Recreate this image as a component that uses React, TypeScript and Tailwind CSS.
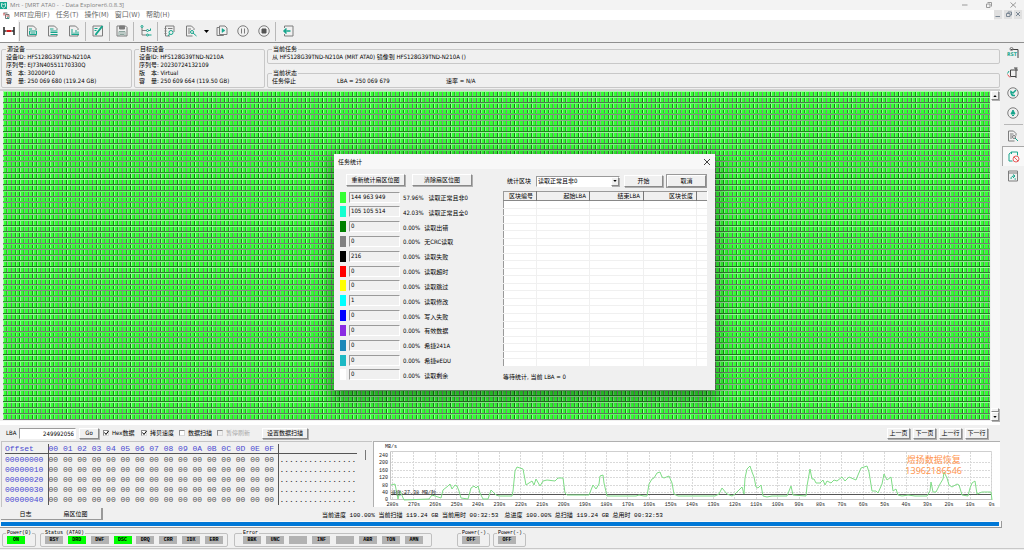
import type { ReactNode } from "react";

const cjk = "font-['DejaVu_Sans_Condensed','Noto_Sans_CJK_SC',sans-serif]";
const mono = "font-['Liberation_Mono','Noto_Sans_CJK_SC',monospace]";

const raised =
  "border border-t-white border-l-white border-r-[#8a8a8a] border-b-[#8a8a8a] bg-[#f0f0f0] shadow-[1px_1px_0_#b0b0b0]";
const sunken = "border border-t-[#9a9a9a] border-l-[#9a9a9a] border-r-white border-b-white";

const menus = ["MRT应用(F)", "任务(T)", "操作(M)", "窗口(W)", "帮助(H)"];

const stats = [
  { color: "bg-[#33ff33]", value: "144 963 949", pct: "57.96%", label: "读取正常且非0" },
  { color: "bg-[#14ffd0]", value: "105 105 514", pct: "42.03%", label: "读取正常且全0" },
  { color: "bg-[#008000]", value: "0", pct: "0.00%", label: "读取出错" },
  { color: "bg-[#808080]", value: "0", pct: "0.00%", label: "无CRC读取" },
  { color: "bg-black", value: "216", pct: "0.00%", label: "读取失败" },
  { color: "bg-[#ff0000]", value: "0", pct: "0.00%", label: "读取超时" },
  { color: "bg-[#ffff00]", value: "0", pct: "0.00%", label: "读取跳过" },
  { color: "bg-[#00ffff]", value: "1", pct: "0.00%", label: "读取修改" },
  { color: "bg-[#0000ff]", value: "0", pct: "0.00%", label: "写入失败" },
  { color: "bg-[#8a2be2]", value: "0", pct: "0.00%", label: "有效数据" },
  { color: "bg-[#1a87b9]", value: "0", pct: "0.00%", label: "希捷241A" },
  { color: "bg-[#1cb8c4]", value: "0", pct: "0.00%", label: "希捷eEDU" },
  { color: "bg-white", value: "0", pct: "0.00%", label: "读取剩余" },
];

const hexCols = ["00", "01", "02", "03", "04", "05", "06", "07", "08", "09", "0A", "0B", "0C", "0D", "0E", "0F"];
const hexRows = ["00000000", "00000010", "00000020", "00000030", "00000040"];

const statusLeds = [
  { name: "BSY", on: false },
  { name: "DRD", on: true },
  { name: "DWF", on: false },
  { name: "DSC", on: true },
  { name: "DRQ", on: false },
  { name: "CRR", on: false },
  { name: "IDX", on: false },
  { name: "ERR", on: false },
];
const errorLeds = ["BBK", "UNC", "", "INF", "", "ABR", "TON", "AMN"];

const speedCurve =
  "17,43 21,42 24,57 26,49 30,58 55,57 58,53 61,54 67,56 69,48 74,44 76,42 78,47 81,43 83,44 85,49 87,56 94,57 97,46 100,44 102,46 104,44 106,51 109,57 114,57 117,48 120,51 122,53 125,54 138,54 139,49 141,29 143,25 146,26 149,27 152,43 155,41 158,39 160,43 162,37 166,44 169,39 173,38 181,39 184,36 189,36 191,51 193,53 215,53 219,43 222,47 225,42 226,34 229,33 230,41 233,54 250,54 262,54 265,53 270,54 273,54 275,42 278,37 280,36 283,31 286,30 288,35 290,36 295,34 298,41 300,52 304,54 321,54 341,54 345,52 348,46 353,52 358,54 361,52 368,45 370,52 371,36 373,27 376,24 378,30 380,35 382,45 384,46 387,43 389,54 393,55 398,54 413,54 417,44 419,53 432,54 433,44 436,27 438,37 440,37 442,41 446,41 449,38 451,43 453,39 457,41 460,38 463,39 468,35 471,39 475,35 482,38 484,33 487,26 493,24 495,30 498,49 502,49 504,51 508,42 510,32 513,38 517,35 519,49 522,47 524,53 528,54 534,53 541,54 553,54 556,49 557,40 559,50 562,50 566,42 569,37 570,30 573,36 575,43 578,45 583,42 585,43 588,53 594,54 596,46 598,41 601,39 603,52 608,50 617,50 618,58";

const range = (n: number) => Array.from({ length: n }, (_, i) => i);

const MAP_W = 987;
const MAP_H = 329;
const EDGE = 8 / 15;

// how much of pixel p is covered by the span [from, to]
const cover = (p: number, from: number, to: number) => Math.max(0, Math.min(p + 1, to) - Math.max(p, from));

// each cell starts with a light edge and ends in a dark edge, both EDGE wide
function edgeLines(size: number, pitch: number) {
  const lines: { pos: number; color: string }[] = [];
  for (let p = 0; p < size; p++) {
    let light = 0;
    let dark = 0;
    const cell = Math.floor(p / pitch);
    for (const end of [cell * pitch, (cell + 1) * pitch]) {
      light += cover(p, end, end + EDGE);
      dark += cover(p, end - EDGE, end);
    }
    const green = 1 - light - dark;
    if (green > 0.98) continue;
    const rb = Math.round(51 * green + 255 * light);
    const g = Math.round(255 * (green + light));
    lines.push({ pos: p, color: `rgb(${rb},${g},${rb})` });
  }
  return lines;
}

const mapRows = edgeLines(MAP_H, 11 * EDGE);
const mapCols = edgeLines(MAP_W, 8 * EDGE);

function SectorMap() {
  return (
    <svg className="block h-[329px] w-full" viewBox={`0 0 ${MAP_W} ${MAP_H}`} preserveAspectRatio="none">
      <rect width={MAP_W} height={MAP_H} fill="#33ff33" />
      {mapCols.map((l) => (
        <rect key={l.pos} x={l.pos} width="1" height={MAP_H} fill={l.color} />
      ))}
      {mapRows.map((l) => (
        <rect key={l.pos} y={l.pos} width={MAP_W} height="1" fill={l.color} />
      ))}
    </svg>
  );
}

function Icon({ children, className = "size-3" }: { children: ReactNode; className?: string }) {
  return (
    <svg viewBox="0 0 24 24" fill="none" stroke="#7d7d7d" strokeWidth="2" className={className}>
      {children}
    </svg>
  );
}

const teal = "#16a58c";

function DocIcon({ children }: { children: ReactNode }) {
  return (
    <Icon>
      <path d="M20 10V7l-5-5H3v20h17v-3" />
      {children}
    </Icon>
  );
}

function ToolButton({ label, children, className = "h-full w-[21px]" }: { label: string; children: ReactNode; className?: string }) {
  return (
    <button type="button" aria-label={label} className={`flex shrink-0 items-center justify-center ${className}`}>
      {children}
    </button>
  );
}

function Sep() {
  return <div className="mx-px h-[19px] w-px shrink-0 bg-[#b8b8b8]" />;
}

function Toolbar() {
  return (
    <div className="flex h-[23px] items-center border-b border-[#8f8f8f] bg-[#f0f0f0]">
      <ToolButton label="连接" className="h-full w-[18px] bg-white">
        <svg viewBox="0 0 24 24" fill="none" className="size-3">
          <path d="M2 4v16M22 4v16" stroke="#222" strokeWidth="3" />
          <path d="M2 12h5M17 12h5" stroke="#333" strokeWidth="3" />
          <path d="M7 12h10" stroke="#d02020" strokeWidth="4" />
        </svg>
      </ToolButton>
      <Sep />
      <ToolButton label="日志文档">
        <DocIcon>
          <path d="M6 8h6M7 12h14v7H7zM9 16h10" stroke={teal} />
        </DocIcon>
      </ToolButton>
      <ToolButton label="列表文档">
        <DocIcon>
          <path d="M6 8h7M7 12h14M7 15h14M7 19h14" stroke={teal} />
        </DocIcon>
      </ToolButton>
      <ToolButton label="图表文档">
        <DocIcon>
          <path d="M8 19V8M12 19v-4M16 19v-9M20 19v-6M7 19h15" stroke={teal} />
        </DocIcon>
      </ToolButton>
      <Sep />
      <ToolButton label="编辑">
        <Icon>
          <path d="M2 2h19v20H2z" />
          <path d="M5 7h6M5 11h4" stroke={teal} />
          <path d="M21 2L9 17l-2 3" stroke={teal} strokeWidth="4" />
        </Icon>
      </ToolButton>
      <Sep />
      <ToolButton label="保存">
        <Icon>
          <path d="M2 2h17l3 3v17H2z" />
          <path d="M7 2h10v6H7z" fill="#7d7d7d" />
          <path d="M6 22v-9h12v9M8 16h8M8 19h8" stroke="#8aa39c" />
        </Icon>
      </ToolButton>
      <Sep />
      <ToolButton label="结构">
        <Icon>
          <path d="M4 5v15h9M4 11h9" />
          <circle cx="4" cy="3" r="2" stroke={teal} />
          <circle cx="15" cy="11" r="2" stroke={teal} />
          <circle cx="15" cy="20" r="2" stroke={teal} />
          <path d="M17 11h4v-4M17 20h6" stroke={teal} />
        </Icon>
      </ToolButton>
      <Sep />
      <ToolButton label="设置">
        <Icon>
          <path d="M3 2h17v12M3 2v20h9M1 7h4M1 12h4M1 17h4M8 7h9" />
          <circle cx="14" cy="15" r="4" stroke={teal} />
          <path d="M11 18l-3 4" stroke={teal} />
        </Icon>
      </ToolButton>
      <ToolButton label="查找">
        <Icon>
          <path d="M15 22H3V2h10l5 5v3M6 8h6M6 12h4M6 16h4" />
          <circle cx="14" cy="14" r="3" stroke={teal} />
          <path d="M16 16l7 6" stroke={teal} />
        </Icon>
      </ToolButton>
      <ToolButton label="更多" className="h-full w-[10px]">
        <svg viewBox="0 0 10 6" className="h-[3px] w-[5px]">
          <path d="M0 0h10L5 6z" fill="#000" />
        </svg>
      </ToolButton>
      <ToolButton label="运行">
        <Icon>
          <path d="M6 5H2v16h13v-3M7 2h11l4 4v13H7z" />
          <path d="M12 7v8l6-4z" fill={teal} stroke={teal} strokeWidth="1" />
        </Icon>
      </ToolButton>
      <ToolButton label="暂停">
        <Icon>
          <circle cx="12" cy="12" r="10.5" />
          <path d="M9 7v10M15 7v10" />
        </Icon>
      </ToolButton>
      <ToolButton label="停止">
        <Icon>
          <circle cx="12" cy="12" r="10.5" />
          <path d="M8 8h8v8H8z" fill="#555" stroke="#555" />
        </Icon>
      </ToolButton>
      <Sep />
      <ToolButton label="退出">
        <Icon>
          <path d="M5 6V2h17v20H5v-4" />
          <path d="M17 12H4M9 7l-5 5 5 5" stroke={teal} strokeWidth="3" />
        </Icon>
      </ToolButton>
    </div>
  );
}

function Group({ title, className, children }: { title: string; className: string; children: ReactNode }) {
  return (
    <fieldset className={`rounded-[2px] border border-[#c8c8c8] pl-1 text-[6px] leading-[8px] ${className}`}>
      <legend className="h-2 px-px">{title}</legend>
      {children}
    </fieldset>
  );
}

function DeviceInfo() {
  return (
    <div className="flex gap-[2px] pt-[2px] pr-[2px] pl-px">
      <Group title="源设备" className="h-[43px] w-[131px] shrink-0">
        <p>设备ID: HFS128G39TND-N210A</p>
        <p>序列号: EJ73N40551170330Q</p>
        <p>版　本: 30200P10</p>
        <p>容　量: 250 069 680 (119.24 GB)</p>
      </Group>
      <Group title="目标设备" className="h-[43px] w-[131px] shrink-0">
        <p>设备ID: HFS128G39TND-N210A</p>
        <p>序列号: 20230724132109</p>
        <p>版　本: Virtual</p>
        <p>容　量: 250 609 664 (119.50 GB)</p>
      </Group>
      <div className="flex min-w-0 flex-1 flex-col justify-between">
        <Group title="当前任务" className="h-[19px]">
          <p>从 HFS128G39TND-N210A (MRT ATA0) 镜像到 HFS128G39TND-N210A ()</p>
        </Group>
        <Group title="当前状态" className="h-[19px]">
          <div className="flex">
            <p className="w-[65px]">任务停止</p>
            <p className="w-[109px]">LBA = 250 069 679</p>
            <p>速率 = N/A</p>
          </div>
        </Group>
      </div>
    </div>
  );
}

function SideBar() {
  return (
    <aside className="flex w-[22px] shrink-0 flex-col items-center">
      <ToolButton label="复位" className="h-5 w-full">
        <svg viewBox="0 0 24 24" fill="none" className="size-3">
          <text x="0" y="18" fontSize="10" fontWeight="700" fill={teal} className={cjk}>RST</text>
          <path d="M8 5h14v17" stroke="#444" strokeWidth="2" />
          <circle cx="9" cy="4" r="3" stroke="#777" strokeWidth="2" />
        </svg>
      </ToolButton>
      <ToolButton label="电源" className="h-5 w-full">
        <svg viewBox="0 0 24 24" fill="none" className="size-3" strokeWidth="2">
          <path d="M7 6h15M18 2v20M7 6v13h11M14 2h7" stroke="#444" />
          <path d="M4 8L1 13" stroke={teal} />
          <path d="M1 15l5 6" stroke="#e05050" />
        </svg>
      </ToolButton>
      <ToolButton label="刷新" className="h-5 w-full">
        <Icon>
          <circle cx="12" cy="12" r="10.5" />
          <path d="M18 6l-6 6-4-3c-1 5 2 9 8 8" stroke={teal} strokeWidth="3" />
        </Icon>
      </ToolButton>
      <ToolButton label="提醒" className="h-5 w-full">
        <Icon>
          <circle cx="12" cy="12" r="10.5" />
          <path d="M12 6l4 8H8zM10 17h4" fill={teal} stroke={teal} />
        </Icon>
      </ToolButton>
      <div className="my-px h-px w-[19px] bg-[#b8b8b8]" />
      <ToolButton label="查看" className="h-5 w-full">
        <Icon>
          <path d="M15 22H3V2h10l5 5v4M6 8h7M6 12h5M6 16h4" />
          <circle cx="14" cy="14" r="3" />
          <path d="M16 16l6 6" stroke={teal} />
        </Icon>
      </ToolButton>
      <ToolButton label="统计" className="h-5 w-full border-t border-l border-[#a8a8a8] bg-[#f8f8f8]">
        <Icon>
          <path d="M9 20H2V6l5-4h12v7M7 2v4" stroke={teal} />
          <circle cx="16" cy="16" r="6" stroke="#e86060" />
          <path d="M12 12l8 8" stroke="#e86060" />
        </Icon>
      </ToolButton>
      <ToolButton label="报告" className="h-5 w-full">
        <Icon>
          <path d="M3 2h18v20H3zM3 6h18" />
          <path d="M8 18c0-5 3-6 7-6M12 9l4 3-4 4M15 18h3" stroke={teal} />
        </Icon>
      </ToolButton>
    </aside>
  );
}

function Btn({ children, className }: { children: ReactNode; className: string }) {
  return (
    <button type="button" className={`flex items-center justify-center whitespace-nowrap ${raised} ${className}`}>
      {children}
    </button>
  );
}

function Check({ label, className, checked, disabled }: { label: string; className: string; checked?: boolean; disabled?: boolean }) {
  return (
    <label className={`flex items-center gap-[3px] whitespace-nowrap ${disabled ? "text-[#a8a8a8]" : ""} ${className}`}>
      <span className="relative size-[6px]">
        <input
          type="checkbox"
          defaultChecked={checked}
          disabled={disabled}
          className="peer block size-[6px] appearance-none border border-[#8c8c8c] border-r-[#d8d8d8] border-b-[#d8d8d8] bg-white disabled:bg-[#f0f0f0]"
        />
        <svg viewBox="0 0 12 12" className="pointer-events-none absolute inset-0 hidden peer-checked:block">
          <path d="M3 5l3 4 5-7" fill="none" stroke="#000" strokeWidth="2" />
        </svg>
      </span>
      {label}
    </label>
  );
}

function LbaBar() {
  return (
    <div className="flex h-4 items-center pr-[14px] pl-[6px] text-[6px] leading-[8px]">
      <label htmlFor="lba" className="w-[13px]">LBA</label>
      <input id="lba" defaultValue="249992056" className={`h-[11px] w-[57px] bg-white pr-px text-right ${sunken}`} />
      <Btn className="ml-[3px] h-[11px] w-[20px]">Go</Btn>
      <Check label="Hex数据" className="ml-[4px] w-[38px]" checked />
      <Check label="拷贝速度" className="w-[38px]" checked />
      <Check label="数据扫描" className="w-[38px]" />
      <Check label="暂停刷新" className="w-[38px]" disabled />
      <Btn className="ml-[7px] h-[11px] w-[46px]">设置数据扫描</Btn>
      <div className="ml-auto flex gap-[3px]">
        {["上一页", "下一页", "上一行", "下一行"].map((t) => (
          <Btn key={t} className="h-[11px] w-[23px]">{t}</Btn>
        ))}
      </div>
    </div>
  );
}

function HexView() {
  return (
    <div className={`flex h-[66px] w-[371px] shrink-0 border-t border-l border-[#c4c4c4] pt-[2px] pl-[3px] text-[8px] ${mono}`}>
      <table className="h-[61px] border-collapse text-left leading-[9px]">
        <thead className="border-b border-[#555]">
          <tr className="text-[#4a4ad0]">
            <th className="w-[43px] border-r border-[#555] p-0 font-normal">Offset</th>
            <th className="w-[230px] border-r border-[#555] p-0 font-normal whitespace-pre">{hexCols.join(" ")}</th>
            <th className="w-[79px] p-0" aria-label="ASCII" />
          </tr>
        </thead>
        <tbody>
          {hexRows.map((r) => (
            <tr key={r}>
              <td className="border-r border-[#555] p-0 text-[#4a4ad0]">{r}</td>
              <td className="border-r border-[#555] p-0 whitespace-pre text-[#555]">{hexCols.map(() => "00").join(" ")}</td>
              <td className="p-0 pl-px text-[#222]">................</td>
            </tr>
          ))}
        </tbody>
      </table>
      <div className="mt-[6px] ml-[8px] h-[10px] w-px bg-[#777]" />
    </div>
  );
}

function SpeedChart() {
  return (
    <div className="relative h-[66px] min-w-0 flex-1 border-t border-l border-[#b0b0b0] bg-white">
      <svg viewBox="0 0 626 65" preserveAspectRatio="xMinYMin meet" fill="none" className={`block h-full w-full ${mono}`}>
        <path d="M16.500 9.500H617.500V58" stroke="#cfcfcf" />
        <path d="M16.500 9.500V57.500H617.500" stroke="#c4c4c4" />
        {range(5).map((i) => (
          <path key={i} d={`M17 ${Math.round(20 + i * 7.5)}.5H617`} stroke="#d9d9d9" strokeDasharray="2 1" />
        ))}
        {range(29).map((i) => (
          <g key={i}>
            <path d={`M${Math.round(18 + i * 21.4)}.5 10V58`} stroke="#d9d9d9" strokeDasharray="2 1" />
            <text x={18.5 + i * 21.4} y="64" fontSize="5" textAnchor="middle" fill="#222">
              {`${(28 - i) * 10}s`}
            </text>
          </g>
        ))}
        {range(7).map((i) => (
          <text key={i} x="14" y={15 + i * 7.4} fontSize="5" textAnchor="end" fill="#222">
            {240 - i * 40}
          </text>
        ))}
        <text x="11" y="6" fontSize="5" fill="#222">MB/s</text>
        <path d="M17 52.500H617" stroke="#555" />
        <polyline points={speedCurve} stroke="#7fdc86" />
        <text x="17" y="52" fontSize="5" fill="#222">速度:27.38 MB/秒</text>
      </svg>
      <div className="absolute top-3 right-[38px] text-center font-['Noto_Sans','Noto_Sans_CJK_SC',sans-serif] text-[9px] leading-[11px] text-[#ff9550]">
        <p>煜扬数据恢复</p>
        <p>13962186546</p>
      </div>
    </div>
  );
}

function Led({ name, on }: { name: string; on?: boolean }) {
  return (
    <span className={`flex h-2 w-[18px] items-center justify-center ${on ? "bg-[#00ff00]" : "bg-[#b2b2b2]"}`}>{name}</span>
  );
}

function LedGroup({ title, className, children }: { title: string; className: string; children: ReactNode }) {
  return (
    <fieldset className={`h-[17px] shrink-0 rounded-[2px] border border-[#c0c0c0] ${className}`}>
      <legend className="ml-[3px] h-[6px] px-px font-normal whitespace-nowrap">{title}</legend>
      <div className="flex justify-between px-1">{children}</div>
    </fieldset>
  );
}

function StatusBar() {
  return (
    <div className={`flex h-[21px] items-start border-b border-[#c8c8c8] pt-[2px] pl-[2px] text-[5px] leading-[6px] font-bold ${mono}`}>
      <LedGroup title="Power(0)" className="w-[34px]">
        <Led name="ON" on />
      </LedGroup>
      <LedGroup title="Status (ATA0)" className="ml-[4px] w-[188px]">
        {statusLeds.map((l) => (
          <Led key={l.name} name={l.name} on={l.on} />
        ))}
      </LedGroup>
      <LedGroup title="Error" className="ml-[6px] w-[198px] px-1">
        {errorLeds.map((name, i) => (
          <Led key={i} name={name} />
        ))}
      </LedGroup>
      <LedGroup title="Power(-)" className="ml-[25px] w-[33px]">
        <Led name="OFF" />
      </LedGroup>
      <LedGroup title="Power(-)" className="ml-[3px] w-[33px]">
        <Led name="OFF" />
      </LedGroup>
    </div>
  );
}

function StatsDialog() {
  return (
    <div
      role="dialog"
      aria-label="任务统计"
      className="absolute top-[154px] left-[334px] h-[236px] w-[381px] bg-[#f0f0f0] text-[6px] leading-[8px] shadow-[0_5px_14px_3px_rgba(0,0,0,0.4)]"
    >
      <div className="flex h-[15px] items-center justify-between bg-[#f8f8f8] pr-[5px] pl-1">
        <h2>任务统计</h2>
        <button type="button" aria-label="关闭">
          <svg viewBox="0 0 12 12" className="size-[6px]">
            <path d="M0 0l12 12M12 0L0 12" stroke="#444" strokeWidth="2" />
          </svg>
        </button>
      </div>
      <div className="flex gap-[27px] px-[6px] pt-[5px]">
        <div className="w-[136px]">
          <div className="flex gap-[7px] pl-[6px]">
            <Btn className="h-3 w-[59px]">重新统计扇区位图</Btn>
            <Btn className="h-3 w-[60px]">清除扇区位图</Btn>
          </div>
          <div className="mt-[5px] flex h-[190px] flex-col justify-between">
            {stats.map((s, i) => (
              <div key={s.label} className="flex h-3 items-center whitespace-nowrap">
                <span className={`h-[11px] w-[6px] ${s.color}`} />
                <input
                  readOnly
                  aria-label={s.label}
                  value={s.value}
                  className={`ml-[3px] h-[11px] w-[51px] bg-[#f0f0f0] pb-[2px] pl-px ${sunken}`}
                />
                <span className="mt-[2px] ml-[3px]">{s.pct}</span>
                <span className={`mt-[2px] ${i < 2 ? "ml-[5px]" : "ml-1"}`}>{s.label}</span>
              </div>
            ))}
          </div>
        </div>
        <div className="min-w-0 flex-1">
          <div className="flex items-center pt-px pl-1">
            <label htmlFor="block" className="w-[29px]">统计区块</label>
            <div className="relative">
              <select id="block" className={`block h-[11px] w-[84px] appearance-none bg-white pl-px ${sunken}`}>
                <option>读取正常且非0</option>
              </select>
              <span className={`pointer-events-none absolute top-px right-px flex h-[9px] w-[8px] items-center justify-center ${raised}`}>
                <svg viewBox="0 0 10 6" className="h-[2px] w-1">
                  <path d="M0 0h10L5 6z" />
                </svg>
              </span>
            </div>
            <Btn className="ml-1 h-3 w-[39px]">开始</Btn>
            <Btn className="ml-1 h-3 w-[39px] outline outline-[#999]">取消</Btn>
          </div>
          <table className={`mt-1 h-[176px] w-[205px] table-fixed border-collapse bg-white text-right ${sunken}`}>
            <thead>
              <tr className="h-[9px] border-b border-[#888] bg-[#f0f0f0]">
                <th className="w-[33px] border-r border-[#777] p-0 pr-[3px] font-normal whitespace-nowrap">区块编号</th>
                <th className="w-[53px] border-r border-[#777] p-0 pr-[3px] font-normal">起始LBA</th>
                <th className="w-[54px] border-r border-[#777] p-0 pr-[3px] font-normal">结束LBA</th>
                <th className="w-[53px] border-r border-[#777] p-0 pr-[3px] font-normal">区块长度</th>
                <th className="p-0" aria-label="空" />
              </tr>
            </thead>
            <tbody>
              {range(22).map((r) => (
                <tr key={r} className="border-b border-[#f0f0f0]">
                  {range(5).map((c) => (
                    <td key={c} className="border-r border-[#f0f0f0] p-0" />
                  ))}
                </tr>
              ))}
            </tbody>
          </table>
          <p className="mt-[6px]">等待统计, 当前 LBA = 0</p>
        </div>
      </div>
    </div>
  );
}

export default function App() {
  return (
    <div className={`relative min-h-screen overflow-hidden bg-[#f0f0f0] text-black ${cjk}`}>
      <header className="flex h-[10px] items-center justify-between bg-[#f3f3f3] pr-[7px] font-['Open_Sans',sans-serif] text-[6px] leading-[8px] text-[#808080]">
        <div className="flex items-center gap-[3px]">
          <svg viewBox="0 0 14 14" className="size-[7px]">
            <rect width="14" height="14" fill="#16a58c" />
            <path d="M3 3l4 2 4-2v6l-4 3-4-3z" fill="none" stroke="#fff" strokeWidth="1.500" />
          </svg>
          <h1 className="whitespace-pre">Mrt - [MRT ATA0 -  - Data Explorer6.0.8.3]</h1>
        </div>
        <svg viewBox="0 0 110 12" fill="none" stroke="#999" strokeWidth="2" className="h-[6px] w-[55px]">
          <path d="M0 6h11M97 1l11 10M108 1L97 11" />
          <path d="M49 4h7v7h-7zM51 1h8v8" />
        </svg>
      </header>
      <nav className="flex h-[10px] items-center bg-white pl-[3px] text-[7px] leading-[10px] text-[#666]">
        <svg viewBox="0 0 14 14" className="size-[7px]" fill="none" strokeWidth="2">
          <path d="M1 2h8M5 5h7v8H5z" stroke="#777" />
          <path d="M2 2v5M7 8h4" stroke="#d04040" />
          <path d="M8 11l4 2" stroke={teal} />
        </svg>
        <ul className="ml-1 flex gap-[6px]">
          {menus.map((m) => (
            <li key={m}>
              <button type="button">{m}</button>
            </li>
          ))}
        </ul>
        <div className="ml-auto flex h-full gap-[2px] bg-[#f0f0f0] pr-[2px]">
          {["M3 13h9", "M5 7h7v6H5zM8 7V4h7v6h-3", "M4 4l8 8M12 4l-8 8"].map((d) => (
            <svg key={d} viewBox="0 0 16 18" className="h-[9px] w-2 bg-[#e0e0e0]">
              <path d={d} fill="none" stroke="#7b8794" strokeWidth="2" />
            </svg>
          ))}
        </div>
      </nav>
      <Toolbar />
      <div className="flex">
        <main className="min-w-0 flex-1">
          <DeviceInfo />
          <div className="mt-[1px] mr-[2px] flex h-[336px] border-t-2 border-b-[4px] border-t-[#d0d0d0] border-b-white pl-[3px]">
            <div className="min-w-0 flex-1">
              <SectorMap />
            </div>
            <div className="ml-px flex w-[9px] flex-col justify-between bg-[#f8f8f8]">
              <Btn className="h-[9px] w-[8px]">
                <svg viewBox="0 0 10 6" className="h-[2px] w-1"><path d="M0 6h10L5 0z" /></svg>
              </Btn>
              <div>
                <div className={`h-1 w-[8px] ${raised}`} />
                <Btn className="h-[9px] w-[8px]">
                  <svg viewBox="0 0 10 6" className="h-[2px] w-1"><path d="M0 0h10L5 6z" /></svg>
                </Btn>
              </div>
            </div>
          </div>
          <LbaBar />
          <div className="mr-[2px] ml-px flex gap-px">
            <HexView />
            <SpeedChart />
          </div>
          <div className="flex h-[14px] items-end pb-px pl-px text-[6px] leading-[8px]">
            <button type="button" className="h-[11px] w-[49px] border-b border-[#999]">日志</button>
            <button type="button" className="h-3 w-[53px] border-r-2 border-b border-[#999]">扇区位图</button>
            <div className={`ml-[219px] flex gap-[6px] ${mono}`}>
              <p>当前进度 100.00% 当前扫描 119.24 GB 当前用时 00:32:53</p>
              <p>总进度 100.00% 总扫描 119.24 GB 总用时 00:32:53</p>
            </div>
          </div>
          <div className="border-r border-b border-[#999] bg-[#f8f8f8] py-[1px] pr-[2px] pl-px">
            <div role="progressbar" aria-valuenow={100} className="h-[4px] bg-[#0078d7]" />
          </div>
        </main>
        <SideBar />
      </div>
      <StatusBar />
      <StatsDialog />
    </div>
  );
}
